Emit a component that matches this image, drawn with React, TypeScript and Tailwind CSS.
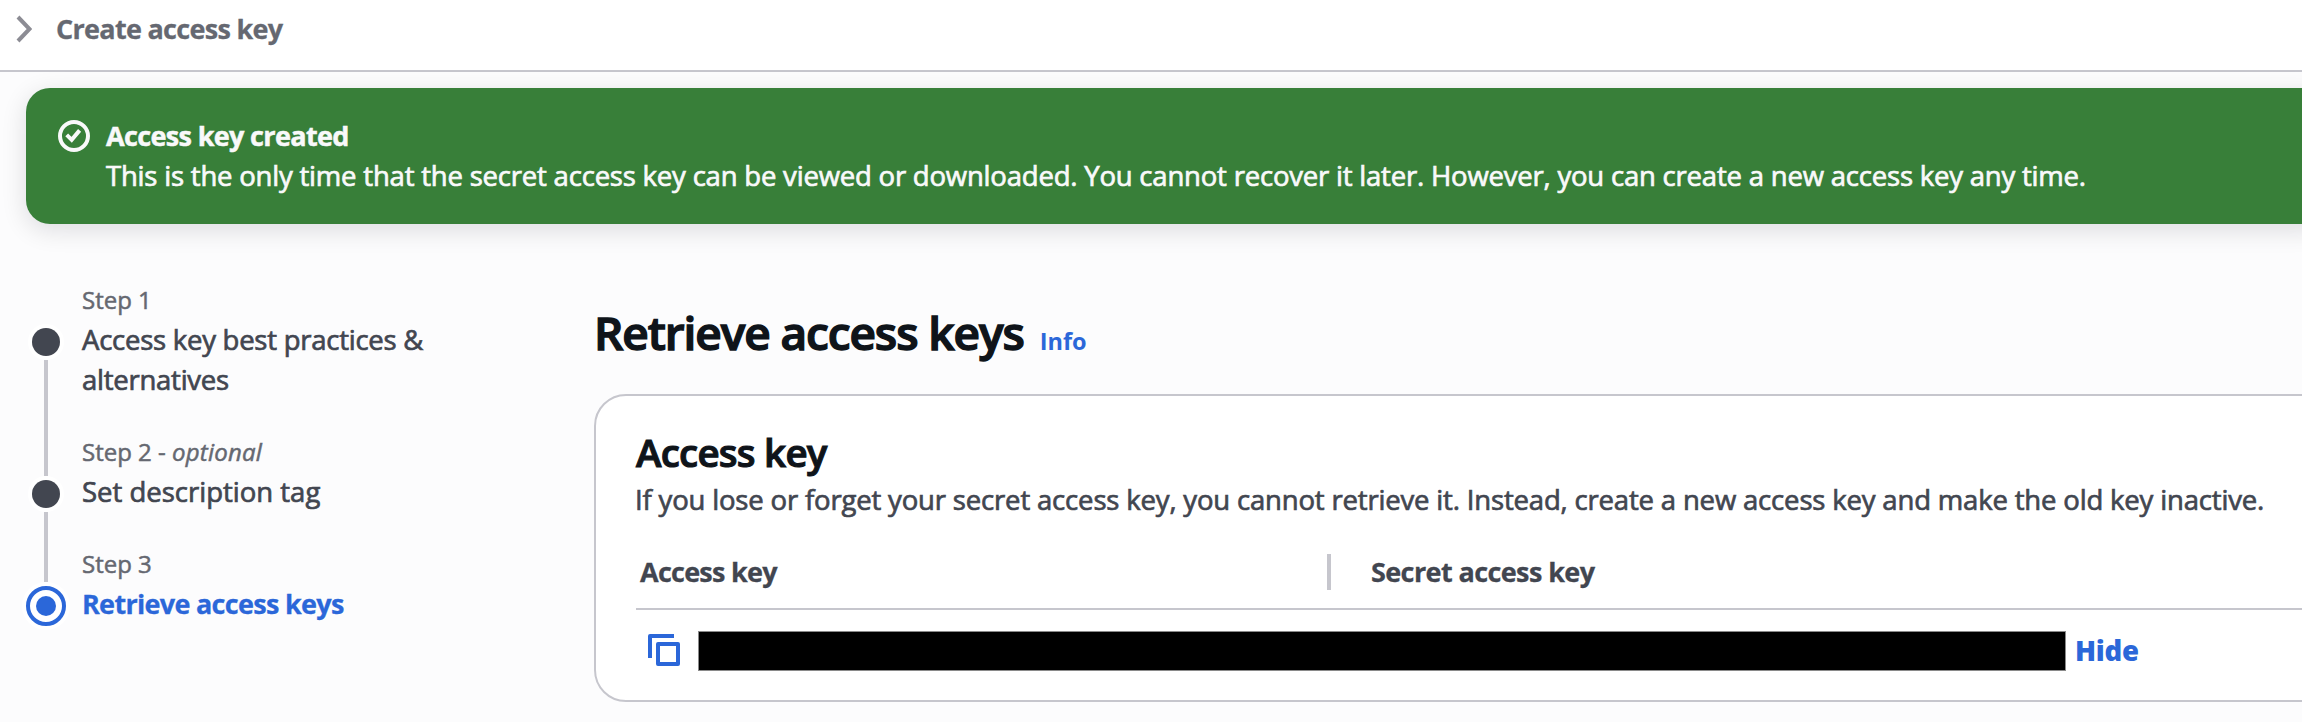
import type { ReactNode } from "react";

function ChevronIcon() {
  return (
    <svg width="16" height="28" viewBox="0 0 16 28" fill="none" stroke="#8c8c94" strokeWidth="4">
      <path d="M2 2l11.5 12L2 26" />
    </svg>
  );
}

function SuccessIcon() {
  return (
    <svg width="32" height="32" viewBox="0 0 32 32" fill="none" stroke="#f9f9fa" strokeWidth="4">
      <circle cx="16" cy="16" r="14" />
      <path d="M8.7 14.8l5 5L21.6 10.4" />
    </svg>
  );
}

function CopyIcon() {
  return (
    <svg width="32" height="32" viewBox="0 0 32 32" fill="none" stroke="#2b67d9" strokeWidth="4" strokeLinejoin="round">
      <path d="M26 2H2v22" />
      <path d="M10 10h20v20H10z" />
    </svg>
  );
}

type StepProps = {
  label: ReactNode;
  height: string;
  first?: boolean;
  active?: boolean;
  children: ReactNode;
};

function Step({ label, height, first, active, children }: StepProps) {
  return (
    <li className={`flex ${height}`}>
      <div className="flex w-10 flex-col items-center">
        <div className={`w-1 shrink-0 ${active ? "h-[34px]" : "h-10"} ${first ? "" : "bg-[#c6c6cd]"}`} />
        {active ? (
          <div className="mt-1 flex size-10 shrink-0 items-center justify-center rounded-full border-4 border-[#2b67d9] bg-white ring-4 ring-white">
            <div className="size-5 rounded-full bg-[#2b67d9]" />
          </div>
        ) : (
          <>
            <div className="my-1 size-7 shrink-0 rounded-full bg-[#424650] ring-4 ring-white" />
            <div className="w-1 flex-1 bg-[#c6c6cd]" />
          </>
        )}
      </div>
      <div className="ml-4 w-[380px]">
        <div className="text-2xl/8 text-[#656871] [-webkit-text-stroke:0.5px]">{label}</div>
        <div className="mt-1">{children}</div>
      </div>
    </li>
  );
}

export default function App() {
  return (
    <div className="h-[722px] w-full overflow-hidden bg-[#fcfcfd] font-['Open_Sans','Noto_Sans',sans-serif] text-[27.5px]/10 text-[#424650]">
      <header className="flex h-[72px] items-start border-b-2 border-[#c6c6cd] bg-white pt-[9px] pl-4">
        <div className="flex h-10 items-center">
          <ChevronIcon />
        </div>
        <span className="ml-6 text-[27px]/10 font-bold tracking-[-0.7px] whitespace-nowrap text-[#656871] [-webkit-text-stroke:0.3px]">Create access key</span>
      </header>

      <section className="mt-4 -mr-8 ml-[26px] flex h-[136px] rounded-3xl bg-[#387f39] pt-7 pl-8 text-[#f9f9fa] shadow-[0_6px_24px_1px_rgba(0,7,22,0.12)]">
        <div className="pt-1">
          <SuccessIcon />
        </div>
        <div className="ml-4 whitespace-nowrap">
          <div className="text-[27px]/10 font-bold tracking-[-0.65px] [-webkit-text-stroke:0.5px]">Access key created</div>
          <div className="tracking-[-0.2px] [-webkit-text-stroke:0.7px]">
            This is the only time that the secret access key can be viewed or downloaded. You cannot recover it later. However, you can create a new access key any time.
          </div>
        </div>
      </section>

      <div className="flex pl-[26px]">
        <nav className="w-[568px] shrink-0 pt-[60px]">
          <ol>
            <Step label="Step 1" height="h-[152px]" first>
              <span className="tracking-[-0.25px] [-webkit-text-stroke:0.7px]">
                Access key best practices &amp;
                <br />
                alternatives
              </span>
            </Step>
            <Step
              height="h-[112px]"
              label={
                <span>
                  Step 2 - <i className="tracking-[0.2px]">optional</i>
                </span>
              }
            >
              <span className="[-webkit-text-stroke:0.7px]">Set description tag</span>
            </Step>
            <Step label="Step 3" height="h-[78px]" active>
              <span className="text-[27px]/10 font-bold tracking-[-0.7px] text-[#2b67d9] [-webkit-text-stroke:0.3px]">Retrieve access keys</span>
            </Step>
          </ol>
        </nav>

        <main className="-mr-16 min-w-0 flex-1 pt-20">
          <div className="flex items-baseline whitespace-nowrap">
            <h1 className="text-[46px]/[56px] font-semibold tracking-[-1.1px] text-[#0f141a] [-webkit-text-stroke:1.4px]">Retrieve access keys</h1>
            <a className="ml-4 text-[23.5px]/8 font-bold text-[#2b67d9]">Info</a>
          </div>

          <section className="mt-[34px] h-[308px] rounded-[32px] border-2 border-[#c6c6cd] bg-white pt-8 pl-10 whitespace-nowrap">
            <h2 className="text-[38.5px]/[48px] font-semibold tracking-[-0.75px] text-[#0f141a] [-webkit-text-stroke:1.1px]">Access key</h2>
            <p className="mt-1 -ml-px tracking-[-0.17px] [-webkit-text-stroke:0.7px]">
              If you lose or forget your secret access key, you cannot retrieve it. Instead, create a new access key and make the old key inactive.
            </p>
            <div className="mt-8 flex h-[58px] border-b-2 border-[#c6c6cd] pl-1 text-[27px]/10 font-bold [-webkit-text-stroke:0.3px]">
              <div className="w-[687px] tracking-[-0.75px]">Access key</div>
              <div className="mt-0.5 h-9 w-1 bg-[#c6c6cd]" />
              <div className="pl-10 tracking-[-0.6px]">Secret access key</div>
            </div>
            <div className="flex items-start pt-[21px] pl-3">
              <div className="pt-[3px]">
                <CopyIcon />
              </div>
              <div className="ml-[18px] h-10 w-[1368px] border border-[#8a8a8a] bg-black" />
              <a className="ml-[9px] text-[27.5px]/10 font-extrabold tracking-[-0.2px] text-[#2b67d9]">Hide</a>
            </div>
          </section>
        </main>
      </div>
    </div>
  );
}
